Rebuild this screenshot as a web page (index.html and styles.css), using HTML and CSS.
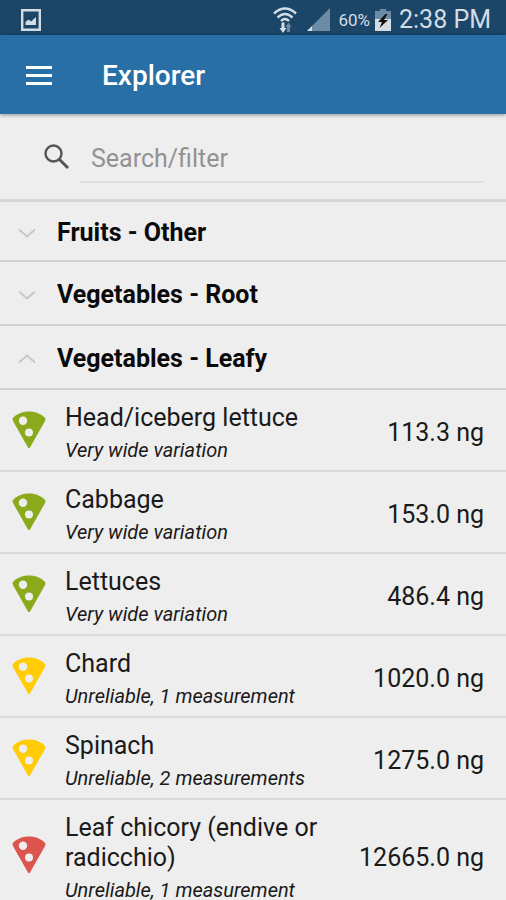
FILE: index.html
```html
<!DOCTYPE html>
<html lang="en">
<head>
<meta charset="utf-8">
<meta name="viewport" content="width=device-width, initial-scale=1">
<title>Explorer</title>
<link rel="stylesheet" href="styles.css">
</head>
<body>
<svg class="defs" aria-hidden="true">
  <symbol id="pizza" viewBox="0 0 34 38">
    <path fill="currentColor" fill-rule="evenodd" d="M17 .5C24 .5 30 3.200 33.500 7.500Q33.500 9 32.500 11L18 36.500Q17 38 16 36.500L1.500 11Q.5 9 .5 7.500C4 3.200 10 .5 17 .5ZM11 5.500A4.200 4.200 0 1 0 11 13.900A4.200 4.200 0 1 0 11 5.500ZM17 17.500A4 4 0 1 0 17 25.500A4 4 0 1 0 17 17.500Z"/>
  </symbol>
  <symbol id="down" viewBox="0 0 18 10">
    <path d="M1 1.500l8 7 8-7" fill="none" stroke="currentColor" stroke-width="2"/>
  </symbol>
  <symbol id="up" viewBox="0 0 18 10">
    <path d="M1 8.500l8-7 8 7" fill="none" stroke="currentColor" stroke-width="2"/>
  </symbol>
</svg>

<div class="status">
  <svg class="status-picture" viewBox="0 0 20 22" aria-hidden="true">
    <path fill="none" stroke="currentColor" stroke-width="2.400" d="M1.200 1.200h17.600v19.600H1.200z"/>
    <path fill="currentColor" d="M4.500 16v-3l3-2.500 2.500 2 5-4.500V16z"/>
  </svg>
  <svg class="status-wifi" viewBox="0 0 24 26" aria-hidden="true">
    <g fill="none" stroke="currentColor" stroke-width="2.400">
      <path d="M1 6.500Q12-3.500 23 6.500"/>
      <path d="M4.500 10.500Q12 3.500 19.500 10.500"/>
      <path d="M8 14Q12 10 16 14"/>
    </g>
    <path fill="currentColor" d="M8.500 15.500h3V21h2L10 26l-3.500-5h2z"/>
    <path class="dim" d="M14 25v-5h-1.500l3-4.500 3 4.500H17v5z"/>
  </svg>
  <svg class="status-signal" viewBox="0 0 23 23" aria-hidden="true">
    <path class="dim" d="M23 0v23H0z"/>
    <path fill="currentColor" d="M5 18v5H0z"/>
  </svg>
  <span class="status-percent">60%</span>
  <svg class="status-battery" viewBox="0 0 16 22" aria-hidden="true">
    <path class="dim" d="M5 0h6v2h5v8H0V2h5z"/>
    <path fill="currentColor" d="M0 10h16v12H0z"/>
    <path class="bolt" d="M10.500 5L3 13h4l-2.500 6L13 11H9l3.500-6z"/>
  </svg>
  <span class="status-time">2:38 PM</span>
</div>

<header class="appbar">
  <button class="menu" type="button" aria-label="Menu">
    <svg viewBox="0 0 26 19" aria-hidden="true"><path fill="currentColor" d="M0 0h26v3H0zM0 8h26v3H0zM0 16h26v3H0z"/></svg>
  </button>
  <h1>Explorer</h1>
</header>

<main>
  <form class="search">
    <label for="filter" aria-label="Search">
      <svg viewBox="0 0 26 26" aria-hidden="true">
        <circle cx="9.500" cy="9.500" r="8" fill="none" stroke="currentColor" stroke-width="2.400"/>
        <path d="M15.500 15.500l8.500 8.500" stroke="currentColor" stroke-width="3"/>
      </svg>
    </label>
    <input id="filter" type="text" placeholder="Search/filter">
  </form>

  <button class="group" type="button" aria-expanded="false"><svg aria-hidden="true"><use href="#down"/></svg>Fruits - Other</button>
  <button class="group" type="button" aria-expanded="false"><svg aria-hidden="true"><use href="#down"/></svg>Vegetables - Root</button>
  <button class="group" type="button" aria-expanded="true"><svg aria-hidden="true"><use href="#up"/></svg>Vegetables - Leafy</button>

  <ul class="items">
    <li><svg class="green" aria-hidden="true"><use href="#pizza"/></svg>
      <div class="text"><h2>Head/iceberg lettuce</h2><p>Very wide variation</p></div><span class="value">113.3 ng</span></li>
    <li><svg class="green" aria-hidden="true"><use href="#pizza"/></svg>
      <div class="text"><h2>Cabbage</h2><p>Very wide variation</p></div><span class="value">153.0 ng</span></li>
    <li><svg class="green" aria-hidden="true"><use href="#pizza"/></svg>
      <div class="text"><h2>Lettuces</h2><p>Very wide variation</p></div><span class="value">486.4 ng</span></li>
    <li><svg class="yellow" aria-hidden="true"><use href="#pizza"/></svg>
      <div class="text"><h2>Chard</h2><p>Unreliable, 1 measurement</p></div><span class="value">1020.0 ng</span></li>
    <li><svg class="yellow" aria-hidden="true"><use href="#pizza"/></svg>
      <div class="text"><h2>Spinach</h2><p>Unreliable, 2 measurements</p></div><span class="value">1275.0 ng</span></li>
    <li><svg class="red" aria-hidden="true"><use href="#pizza"/></svg>
      <div class="text"><h2>Leaf chicory (endive or radicchio)</h2><p>Unreliable, 1 measurement</p></div><span class="value">12665.0 ng</span></li>
  </ul>
</main>
</body>
</html>
```
FILE: styles.css
```css
* {
  box-sizing: border-box;
  margin: 0;
  padding: 0;
}

body {
  display: flex;
  flex-direction: column;
  height: 100vh;
  overflow: hidden;
  background: #eee;
  color: #1a1a1a;
  font-family: Roboto, sans-serif;
  font-size: 25px;
  line-height: 30px;
}

svg {
  display: block;
  flex: none;
}

button {
  border: 0;
  background: none;
  color: inherit;
  font: inherit;
  cursor: pointer;
}

.defs {
  position: absolute;
  width: 0;
  height: 0;
}

.status {
  display: flex;
  flex: none;
  align-items: center;
  height: 35px;
  padding: 4px 15px 0 21px;
  background: #1c4668;
  color: #d5dde4;
}

.status .dim {
  fill: #6d8ba5;
}

.status .bolt {
  fill: #111;
}

.status-picture {
  width: 20px;
  height: 22px;
  margin-right: auto;
}

.status-wifi {
  width: 24px;
  height: 26px;
}

.status-signal {
  width: 23px;
  height: 23px;
  margin: 0 8px 0 10px;
}

.status-percent {
  font-size: 17px;
}

.status-battery {
  width: 16px;
  height: 22px;
  margin: 0 8px 0 5px;
}

.appbar {
  position: relative;
  display: flex;
  flex: none;
  align-items: center;
  height: 79px;
  padding: 3px 20px 0;
  background: #286fa5;
  color: #fff;
  box-shadow: 0 1px 4px rgba(0, 0, 0, 0.4);
}

.menu {
  padding: 5px 6px 7px;
}

.menu svg {
  width: 26px;
  height: 19px;
}

.appbar h1 {
  margin-left: 44px;
  font-size: 28px;
  font-weight: 500;
}

main {
  flex: 1;
  min-height: 0;
  overflow: hidden;
}

.search {
  display: flex;
  align-items: center;
  gap: 10px;
  height: 88px;
  padding: 0 22px 0 44px;
  border-bottom: 3px solid #d6d6d6;
}

.search svg {
  width: 26px;
  height: 26px;
  color: #555;
}

.search input {
  flex: 1;
  min-width: 0;
  height: 52px;
  padding: 5px 11px 0;
  border: 0;
  border-bottom: 2px solid #dedede;
  background: none;
  color: #111;
  font: inherit;
  outline: 0;
}

.search input::placeholder {
  color: #929292;
  opacity: 1;
}

.group {
  display: flex;
  align-items: center;
  gap: 21px;
  width: 100%;
  height: 60px;
  padding: 3px 18px 0;
  border-bottom: 2px solid #d0d0d0;
  color: #0a0a0a;
  font-weight: 700;
}

.group svg {
  width: 18px;
  height: 10px;
  color: #c8c8c8;
}

.group + .group {
  height: 64px;
}

.items {
  list-style: none;
}

.items li {
  display: flex;
  align-items: center;
  min-height: 82px;
  padding: 13px 22px 8px 12px;
  border-bottom: 2px solid #dadada;
}

.items svg {
  width: 34px;
  height: 38px;
  margin-bottom: 5px;
}

.text {
  flex: 1;
  min-width: 0;
  padding: 0 12px 0 19px;
}

.text h2 {
  font-size: 25px;
  font-weight: 400;
}

.text p {
  margin-top: 5px;
  font-size: 20px;
  line-height: 24px;
  font-style: italic;
}

.value {
  font-size: 25px;
  white-space: nowrap;
}

.green { color: #8aaa1c; }
.yellow { color: #ffcc05; }
.red { color: #dc544e; }
```
